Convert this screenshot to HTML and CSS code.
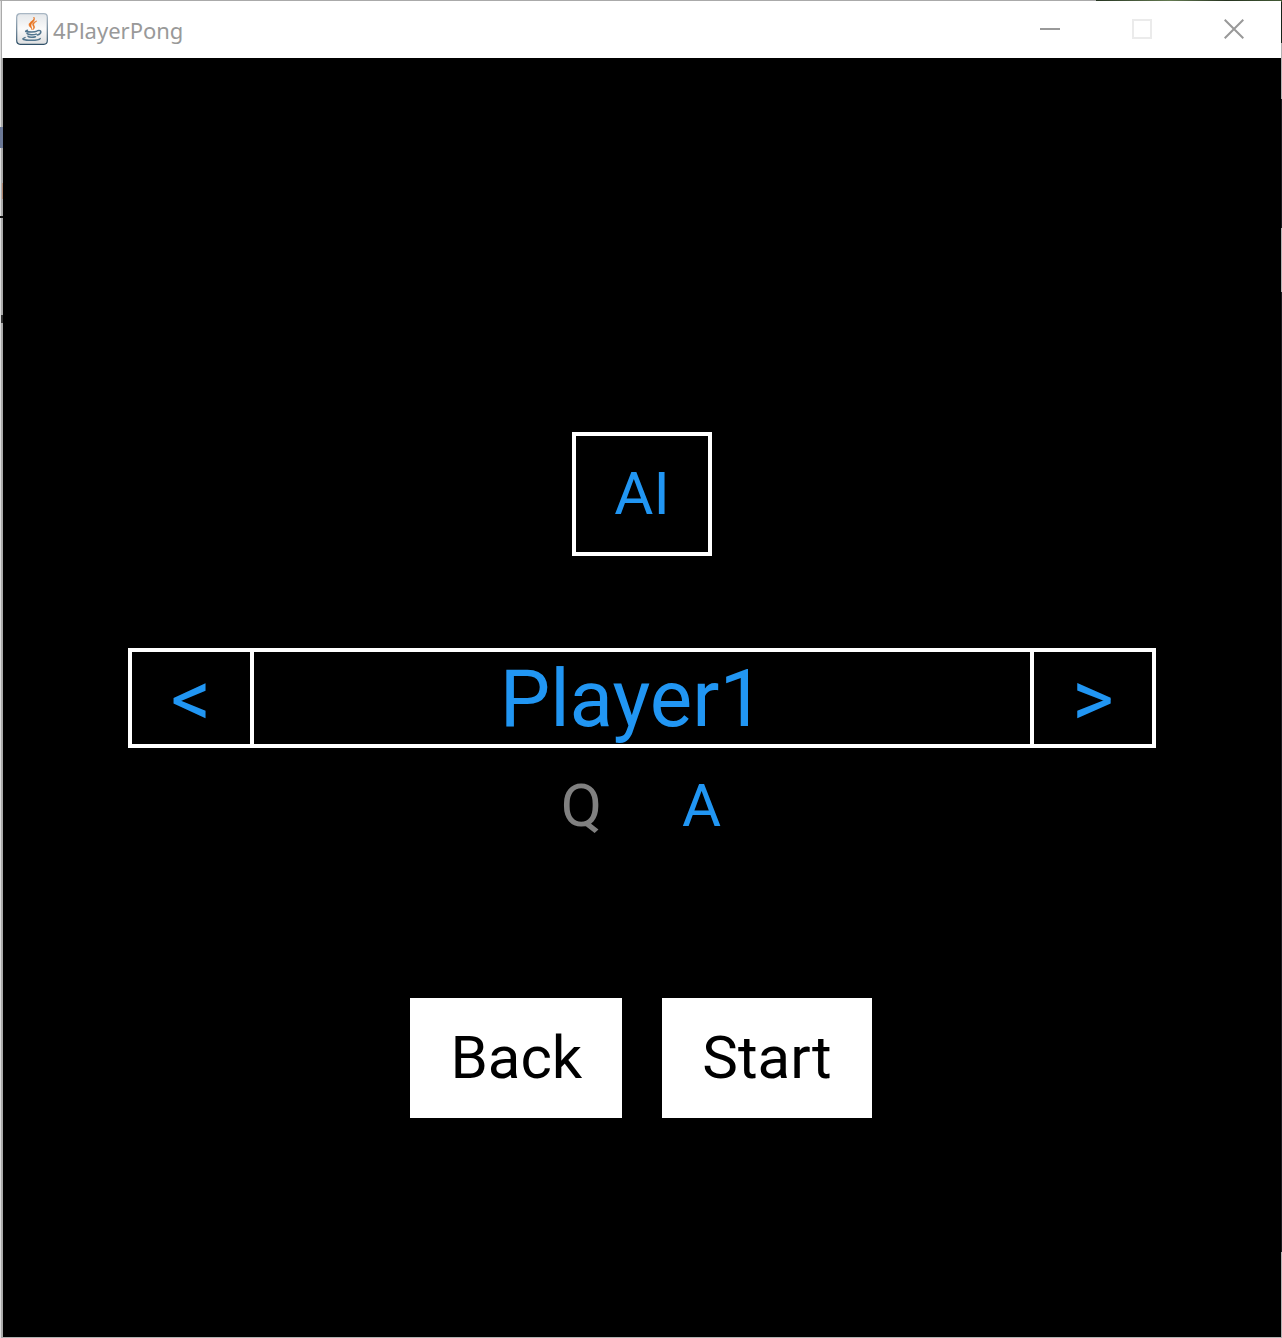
FILE: index.html
```html
<!DOCTYPE html>
<html lang="en">
<head>
<meta charset="utf-8">
<title>4PlayerPong</title>
<link rel="stylesheet" href="styles.css">
</head>
<body>
<div class="window">
  <header class="titlebar">
    <svg class="app-icon" viewBox="0 0 32 32" aria-hidden="true">
      <defs>
        <linearGradient id="face" x1="0" y1="0" x2="0" y2="1"><stop offset="0" stop-color="#e4e7ea"/><stop offset=".5" stop-color="#fafafa"/><stop offset="1" stop-color="#dedfe0"/></linearGradient>
        <linearGradient id="rim" x1="0" y1="0" x2="0" y2="1"><stop offset="0" stop-color="#a9b7c4"/><stop offset="1" stop-color="#2f5068"/></linearGradient>
      </defs>
      <rect x=".7" y=".7" width="30.6" height="30.6" rx="3.5" fill="url(#face)" stroke="url(#rim)" stroke-width="1.2"/>
      <path d="M17.800 4c1.500 3.500-5.200 4.800-4.800 8 .2 2 2.600 2.500 3 4.800-.2-2.500-1.200-3.300-1-4.800.4-2.600 5.200-4 2.800-8zM20.800 8c-2.500.7-4.500 2-4.200 3.700.3 1.500 1.900 2.300.4 5 3.200-2.700.6-4 .7-5.200.1-1.300 1.500-2.300 3.100-3.500z" fill="#e9731f" stroke="#e9731f" stroke-width=".6"/>
      <g fill="none" stroke="#52758e" stroke-width="1.5" stroke-linecap="round">
        <path d="M11.500 17.300c-3.500 1-2 1.700 4 1.700 3 0 4.500-.3 5.500-.8M11 20.500c1 1.500 7 1.400 9.200.6M12 23.200c1 1.300 5.500 1.200 7.500.5M21.500 17.600c4.500-1.200 4.500 3.200-.2 4.300M9 24.600c-4.500 1.500-1.500 2.700 6.500 2.700 5 0 8-.7 8.700-1.700"/>
      </g>
    </svg>
    <span class="title">4PlayerPong</span>
    <div class="controls">
      <button class="control" aria-label="Minimize"><svg viewBox="0 0 20 20"><path d="M0 10h20" stroke="#999" stroke-width="2"/></svg></button>
      <button class="control" aria-label="Maximize" disabled><svg viewBox="0 0 20 20"><path d="M1 1h18v18H1z" fill="none" stroke="#ebebeb" stroke-width="2"/></svg></button>
      <button class="control" aria-label="Close"><svg viewBox="0 0 20 20"><path d="M.7.7l18.600 18.600M19.300.7L.7 19.300" stroke="#999" stroke-width="2"/></svg></button>
    </div>
  </header>
  <main class="game">
    <button class="mode">AI</button>
    <div class="selector">
      <button class="step">&lt;</button>
      <output class="player">Player1</output>
      <button class="step">&gt;</button>
    </div>
    <div class="keys"><span class="key-up">Q</span><span class="key-down">A</span></div>
    <div class="actions">
      <button class="action">Back</button>
      <button class="action">Start</button>
    </div>
  </main>
</div>
</body>
</html>
```
FILE: styles.css
```css
* {
  box-sizing: border-box;
}

/* The desktop shows through in the thin strips round the window. */
body {
  margin: 0;
  min-height: 100vh;
  padding: 1px 1px 1px 3px;
  display: flex;
  background:
    linear-gradient(90deg, #263522, #657b52 40%, #26331f 70%, #435b36) top right / 186px 2px no-repeat,
    linear-gradient(#aaa, #aaa) top left / 100% 1px no-repeat,
    linear-gradient(#6b7896, #6b7896) 0 127px / 3px 21px no-repeat,
    linear-gradient(#b08770, #b08770) 2px 183px / 1px 16px no-repeat,
    linear-gradient(#111, #111) 0 216px / 3px 2px no-repeat,
    linear-gradient(#333, #333) 1px 315px / 2px 8px no-repeat,
    linear-gradient(#17231a, #17231a) right 0 / 1px 43px no-repeat,
    linear-gradient(#1c1c20, #1c1c20) right 99px / 1px 129px no-repeat,
    linear-gradient(#b2b2b2, #b2b2b2) right 228px / 1px 64px no-repeat,
    linear-gradient(#1c1c20, #1c1c20) right 292px / 1px 960px no-repeat,
    linear-gradient(90deg, #dedede 1px, #aaa 1px 3px, #b2b2b2 3px);
}

.window {
  flex: 1;
  display: flex;
  flex-direction: column;
  background: #000;
  font-family: Roboto, sans-serif;
}

button {
  margin: 0;
  padding: 0;
  border: 0;
  background: none;
  font: inherit;
}

.titlebar {
  display: flex;
  align-items: center;
  height: 57px;
  margin-left: -1px;
  padding: 0 1px 1px 14px;
  background: #fff;
}

.app-icon {
  width: 32px;
  height: 32px;
}

.title {
  padding: 2px 0 0 5px;
  font: 22px/28px "Noto Sans", sans-serif;
  color: #999;
}

.controls {
  display: flex;
  margin-left: auto;
}

.control {
  display: grid;
  place-items: center;
  width: 92px;
  height: 56px;
}

.control svg {
  width: 20px;
  height: 20px;
}

.game {
  flex: 1;
  display: flex;
  flex-direction: column;
  align-items: center;
  padding: 374px 125px 40px;
  font-size: 60px;
  line-height: 72px;
  color: #2196f3;
}

.mode {
  width: 140px;
  height: 124px;
  border: 4px solid #fff;
  color: inherit;
}

.selector {
  align-self: stretch;
  display: flex;
  height: 100px;
  margin-top: 92px;
  border: 4px solid #fff;
  font-size: 80px;
  line-height: 94px;
}

.step {
  width: 118px;
  color: inherit;
}

.player {
  flex: 1;
  padding-right: 20px;
  border: solid #fff;
  border-width: 0 4px;
  text-align: center;
}

.keys {
  display: flex;
  gap: 80px;
  margin-top: 22px;
  padding-right: 2px;
}

.key-up {
  color: #808080;
}

.actions {
  display: flex;
  gap: 40px;
  margin-top: 156px;
  padding-right: 2px;
}

.action {
  height: 120px;
  padding: 0 40px;
  background: #fff;
  color: #000;
}
```
